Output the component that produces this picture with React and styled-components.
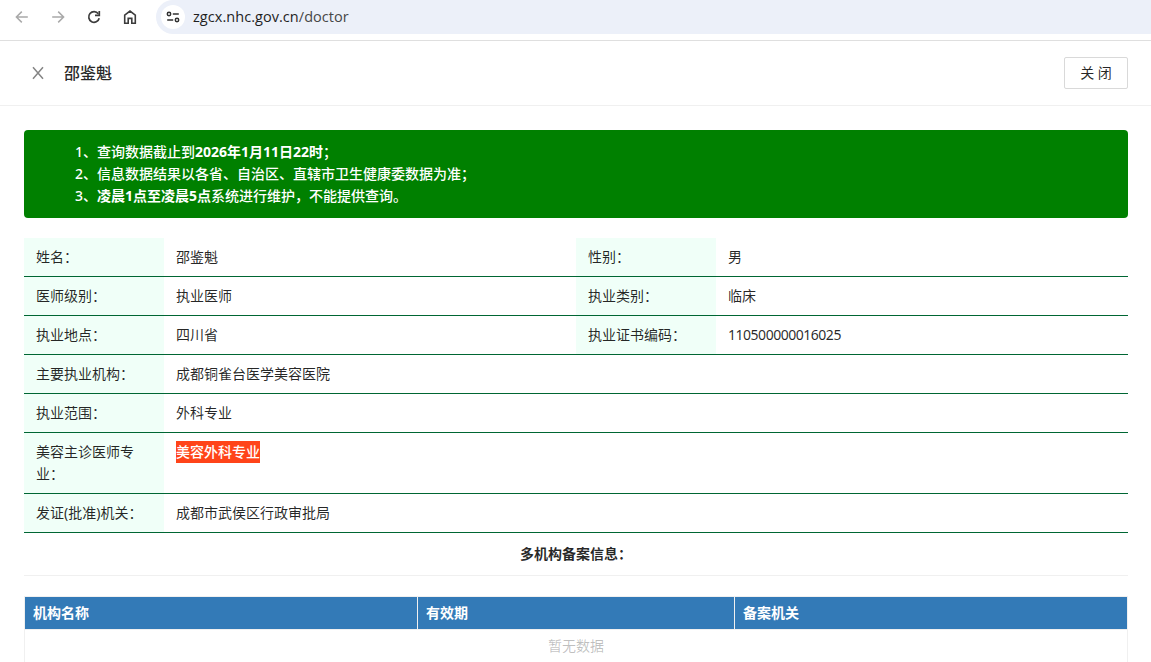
import styled, { createGlobalStyle } from "styled-components";

const GlobalStyle = createGlobalStyle`
    body {
        margin: 0;
        background: #fff;
        overflow: hidden;
        font-family: "Noto Sans", "Noto Sans CJK SC", sans-serif;
        font-size: 14px;
        line-height: 22px;
        color: rgba(0,0,0,.85);
    }
    * {
        box-sizing: border-box;
    }
`
const Page = styled.div`
    height: 662px;
    overflow: hidden;
`;
const BrowserBar = styled.div`
    height: 41px;
    display: flex;
    align-items: flex-start;
    border-bottom: 1px solid #dfdfdf;
`;
const NavButtons = styled.div`
    display: flex;
    gap: 16px;
    padding: 7px 16px 0 12px;
    & svg {
        display: block;
    }
`;
const AddressBar = styled.div`
    flex: 1;
    height: 34px;
    display: flex;
    align-items: center;
    padding-left: 5px;
    background: #ecf0f9;
    border-radius: 17px 0 0 17px;
`;
const SiteInfo = styled.div`
    width: 24px;
    height: 24px;
    display: flex;
    align-items: center;
    justify-content: center;
    border-radius: 50%;
    background: #fff;
`;
const Url = styled.div`
    margin-left: 8px;
    font-family: "Open Sans", sans-serif;
    font-size: 14.5px;
    letter-spacing: 0.05px;
    color: #1f1f1f;
    & span {
        color: #474747;
    }
`;
const DrawerHeader = styled.div`
    height: 65px;
    display: flex;
    align-items: center;
    padding: 0 23px 0 30px;
    border-bottom: 1px solid #f0f0f0;
`;
const Title = styled.div`
    flex: 1;
    margin-left: 18px;
    font-size: 16px;
    font-weight: 500;
`;
const CloseButton = styled.button`
    width: 64px;
    height: 32px;
    padding: 0;
    border: 1px solid #d9d9d9;
    border-radius: 2px;
    background: #fff;
    font: inherit;
    color: inherit;
`;
const Content = styled.div`
    padding: 24px 23px 0 24px;
`;
const Notice = styled.div`
    height: 88px;
    padding: 11px 51px;
    margin-bottom: 20px;
    border-radius: 4px;
    background: #008000;
    color: #fff;
    font-weight: 500;
    & b {
        font-weight: 700;
    }
`;
const InfoRow = styled.div`
    display: flex;
    border-bottom: 1px solid #006633;
`;
const Label = styled.div`
    width: 140px;
    flex: none;
    padding: 8px 12px;
    background: #f0fff8;
`;
const Value = styled.div`
    flex: 1;
    padding: 8px 12px;
    letter-spacing: ${({$tight}) => $tight ? '-0.48px' : 'normal'};
`;
const Highlight = styled.span`
    display: block;
    width: 84px;
    height: 22px;
    background: #ff4419;
    color: #fff;
    font-weight: 500;
`;
const SectionTitle = styled.div`
    height: 43px;
    padding-top: 10px;
    margin-bottom: 20px;
    border-bottom: 1px solid #f0f0f0;
    text-align: center;
    font-weight: 700;
`;
const Table = styled.div`
    height: 80px;
    border: 1px solid #f0f0f0;
`;
const TableHead = styled.div`
    display: grid;
    grid-template-columns: 393px 317px 1fr;
    height: 33px;
    border-bottom: 1px solid #f0f0f0;
    background: #337ab7;
    color: #fff;
    font-weight: 700;
`;
const HeadCell = styled.div`
    padding: 5px 8px;
    border-right: 1px solid #f0f0f0;
    &:last-child {
        border-right: none;
    }
`;
const Empty = styled.div`
    padding-top: 5px;
    text-align: center;
    color: rgba(0,0,0,.25);
`;

// full-width punctuation
const COLON = '\uff1a';
const SEMICOLON = '\uff1b';
const COMMA = '\uff0c';

const infoRows = [
    [['姓名', '邵鉴魁'], ['性别', '男']],
    [['医师级别', '执业医师'], ['执业类别', '临床']],
    [['执业地点', '四川省'], ['执业证书编码', '110500000016025']],
    [['主要执业机构', '成都铜雀台医学美容医院']],
    [['执业范围', '外科专业']],
    [['美容主诊医师专业', <Highlight key="major">美容外科专业</Highlight>]],
    [['发证(批准)机关', '成都市武侯区行政审批局']],
];

const ArrowIcon = ({flip}) => (
    <svg width="20" height="20" viewBox="0 0 20 20" fill="none" stroke="#a9a9a9" strokeWidth="1.5">
        <path d={flip ? "M4.2 10h11.2M10.2 4.6 15.6 10l-5.4 5.4" : "M15.8 10H4.6M9.8 4.6 4.4 10l5.4 5.4"}/>
    </svg>
)

const ReloadIcon = () => (
    <svg width="20" height="20" viewBox="0 0 20 20" fill="none" stroke="#3c3c3c" strokeWidth="1.7">
        <path d="M14.3 6.8A5.3 5.3 0 1 0 15.2 11.2"/>
        <path d="M15.3 4v4.3H11"/>
    </svg>
)

const HomeIcon = () => (
    <svg width="20" height="20" viewBox="0 0 20 20" fill="none" stroke="#3c3c3c" strokeWidth="1.6">
        <path d="M4.7 8.2 10 4.1l5.3 4.1v8h-3.5v-4.8H8.2v4.8H4.7z"/>
    </svg>
)

const TuneIcon = () => (
    <svg width="14" height="14" viewBox="0 0 14 14" fill="none" stroke="#303030" strokeWidth="1.5">
        <circle cx="3" cy="4" r="1.7"/>
        <path d="M6.8 4h6M1.2 10h6"/>
        <circle cx="11" cy="10" r="1.7"/>
    </svg>
)

const CloseIcon = () => (
    <svg width="16" height="16" viewBox="0 0 16 16" fill="none" stroke="#858585" strokeWidth="1.5">
        <path d="M3 2.2 13 13.8M13 2.2 3 13.8"/>
    </svg>
)

const App = () => {
    return (
        <Page lang="zh-CN">
            <GlobalStyle/>
            <BrowserBar>
                <NavButtons>
                    <ArrowIcon/>
                    <ArrowIcon flip/>
                    <ReloadIcon/>
                    <HomeIcon/>
                </NavButtons>
                <AddressBar>
                    <SiteInfo><TuneIcon/></SiteInfo>
                    <Url>zgcx.nhc.gov.cn<span>/doctor</span></Url>
                </AddressBar>
            </BrowserBar>
            <DrawerHeader>
                <CloseIcon/>
                <Title>邵鉴魁</Title>
                <CloseButton>关 闭</CloseButton>
            </DrawerHeader>
            <Content>
                <Notice>
                    <div>1、查询数据截止到<b>2026年1月11日22时</b>{SEMICOLON}</div>
                    <div>2、信息数据结果以各省、自治区、直辖市卫生健康委数据为准{SEMICOLON}</div>
                    <div>3、<b>凌晨1点至凌晨5点</b>系统进行维护{COMMA}不能提供查询。</div>
                </Notice>
                {infoRows.map((row, i) => (
                    <InfoRow key={i}>
                        {row.map(([label, value]) => [
                            <Label key={label}>{label + COLON}</Label>,
                            <Value key={label + 'value'} $tight={/^\d+$/.test(value)}>{value}</Value>
                        ])}
                    </InfoRow>
                ))}
                <SectionTitle>多机构备案信息{COLON}</SectionTitle>
                <Table>
                    <TableHead>
                        <HeadCell>机构名称</HeadCell>
                        <HeadCell>有效期</HeadCell>
                        <HeadCell>备案机关</HeadCell>
                    </TableHead>
                    <Empty>暂无数据</Empty>
                </Table>
            </Content>
        </Page>
    )
}
export default App;
